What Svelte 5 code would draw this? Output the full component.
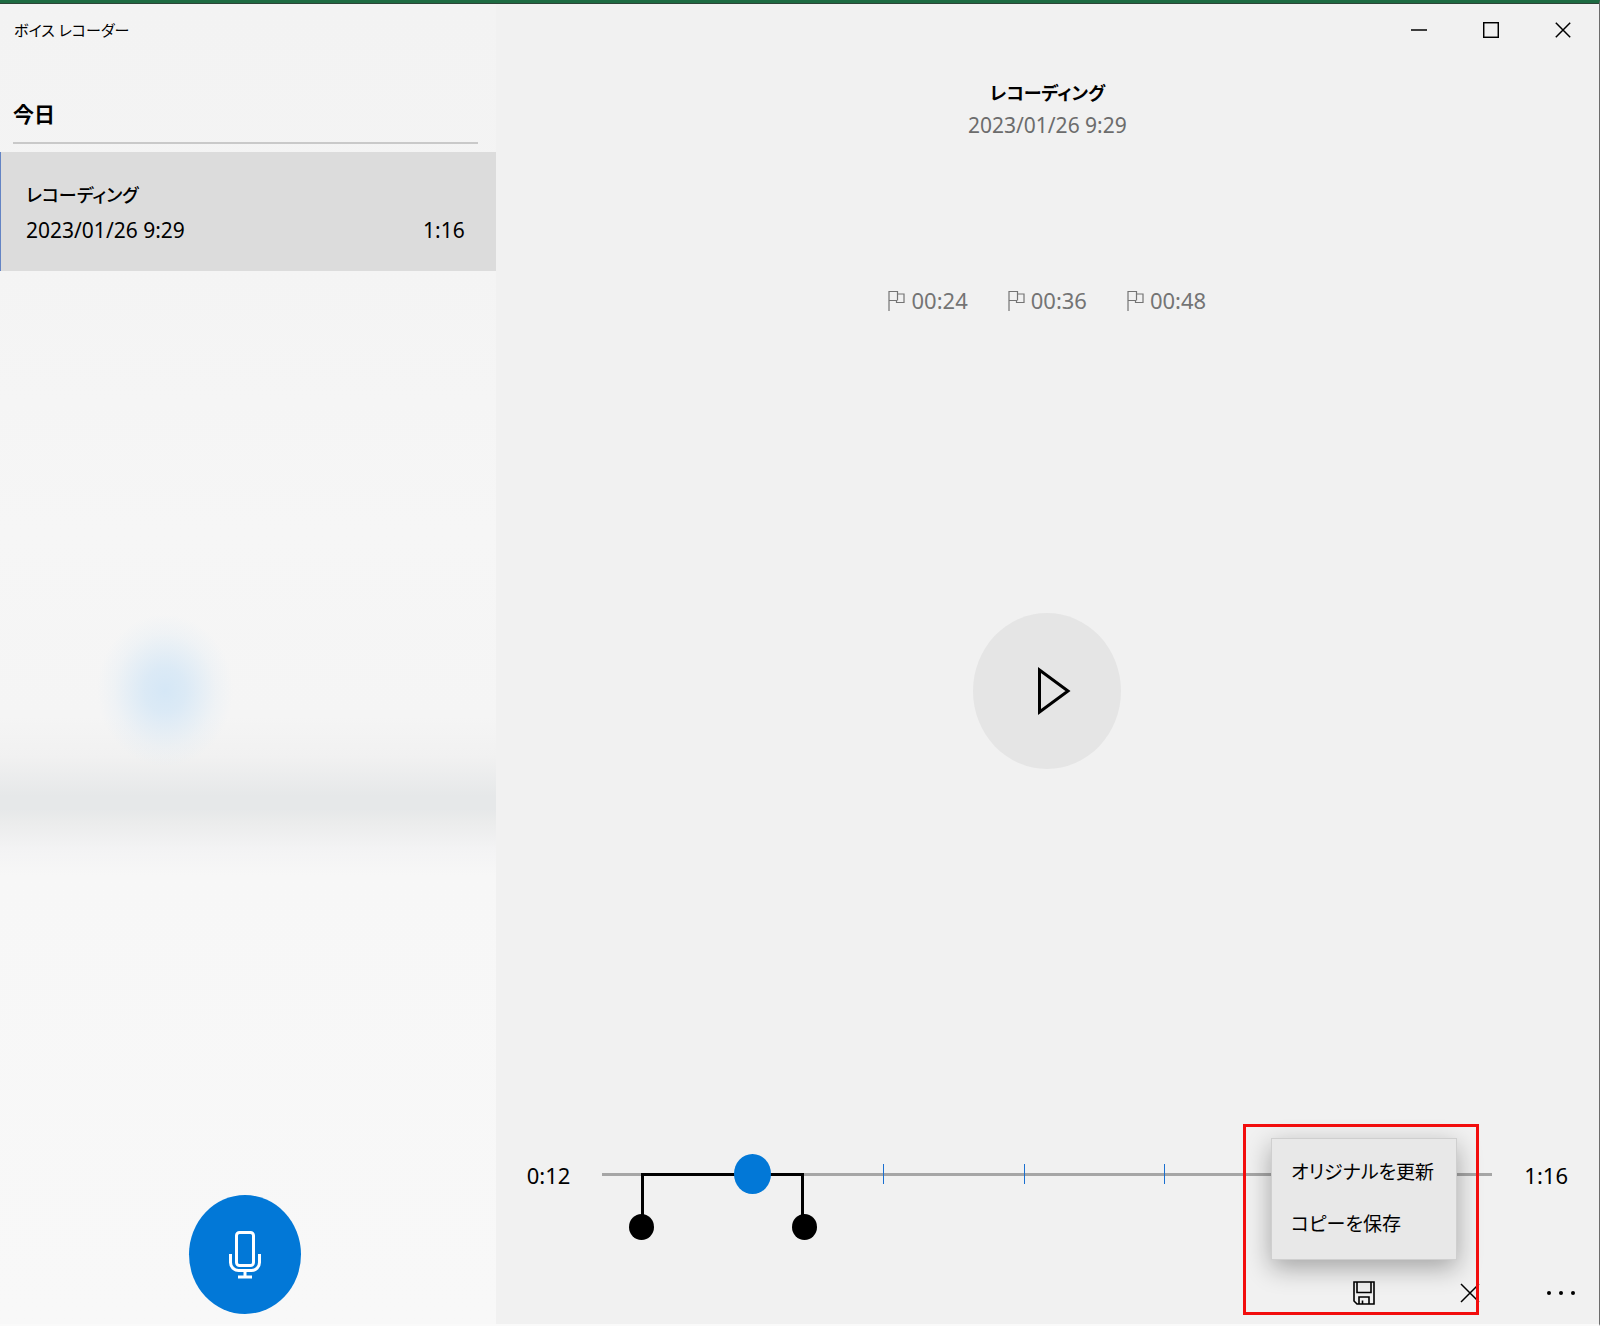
<script lang="ts">
  interface Recording { id: number; name: string; date: string; length: number; }

  const recordings: Recording[] = [
    { id: 1, name: 'レコーディング', date: '2023/01/26 9:29', length: 76 }
  ];
  const markers = [24, 36, 48];

  let selectedId = $state(1);
  let position = $state(11.7);
  let trimStart = $state(2.3);
  let trimEnd = $state(16.7);
  let menuOpen = $state(true);

  let current = $derived(recordings.find((r) => r.id === selectedId) ?? recordings[0]);

  function formatTime(s: number): string {
    const total = Math.round(s);
    return `${Math.floor(total / 60)}:${String(total % 60).padStart(2, '0')}`;
  }

  // the handle is 25px wide, so its centre travels over 100% - 25px
  function handleX(s: number): string {
    return `calc(12px + (100% - 25px) * ${s / current.length})`;
  }
</script>

<div class="window">
  <aside class="sidebar">
    <h1 class="app-title">ボイス レコーダー</h1>
    <h2 class="group-title">今日</h2>
    <ul class="recordings">
      {#each recordings as rec (rec.id)}
        <li>
          <button class="recording" class:selected={rec.id === selectedId} onclick={() => (selectedId = rec.id)}>
            <span class="rec-name">{rec.name}</span>
            <span class="rec-info">
              <span>{rec.date}</span>
              <span>{formatTime(rec.length)}</span>
            </span>
          </button>
        </li>
      {/each}
    </ul>
    <button class="record" aria-label="録音">
      <svg width="32" height="48" viewBox="0 0 32 48" fill="none" stroke="#fff" stroke-width="3">
        <rect x="7.5" y="1.5" width="17" height="33" rx="3" />
        <path d="M1.5 23v8.500a8 8 0 0 0 8 8h13a8 8 0 0 0 8-8V23M16 39v7M9 46h14" />
      </svg>
    </button>
  </aside>

  <main class="player">
    <div class="titlebar">
      <button class="caption" aria-label="最小化">
        <svg width="16" height="16" viewBox="0 0 16 16"><path d="M0 8h16" /></svg>
      </button>
      <button class="caption" aria-label="最大化">
        <svg width="16" height="16" viewBox="0 0 16 16"><rect x="0.7" y="0.7" width="14.600" height="14.600" /></svg>
      </button>
      <button class="caption" aria-label="閉じる">
        <svg width="16" height="16" viewBox="0 0 16 16"><path d="M.8.8l14.400 14.400M15.200.8L.8 15.200" /></svg>
      </button>
    </div>

    <header class="heading">
      <h2>{current.name}</h2>
      <p>{current.date}</p>
    </header>

    <div class="markers">
      {#each markers as m}
        <button class="marker" onclick={() => (position = m)}>
          <svg width="17" height="21" viewBox="0 0 17 21" fill="none" stroke="currentColor" stroke-width="1.200">
            <path d="M1 21V1.500h8.500v2.500h6.500v8.500H8.500V10.500H1M9.500 4v6.500" />
          </svg>
          0{formatTime(m)}
        </button>
      {/each}
    </div>

    <div class="stage">
      <button class="play" aria-label="再生">
        <svg width="34" height="50" viewBox="0 0 34 50" fill="none" stroke="#000" stroke-width="3">
          <path d="M2.500 4v42L31 25z" />
        </svg>
      </button>
    </div>

    <div class="timeline">
      <span class="time">{formatTime(position)}</span>
      <div class="track">
        <div class="rail"></div>
        {#each markers as m}
          <div class="tick" style="left: {(m / current.length) * 100}%"></div>
        {/each}
        <div class="trim" style="left: {handleX(trimStart)}; right: calc(100% - {handleX(trimEnd)})"></div>
        <input class="handle" type="range" min="0" max={current.length} step="0.1" bind:value={trimStart} aria-label="トリミングの開始" />
        <input class="handle" type="range" min="0" max={current.length} step="0.1" bind:value={trimEnd} aria-label="トリミングの終了" />
        <input class="seek" type="range" min="0" max={current.length} step="0.1" bind:value={position} aria-label="再生位置" />
      </div>
      <span class="time">{formatTime(current.length)}</span>
    </div>

    <div class="commands">
      <div class="save">
        <button class="command" aria-label="保存" onclick={() => (menuOpen = !menuOpen)}>
          <svg width="22" height="24" viewBox="0 0 22 24" fill="none" stroke="#000" stroke-width="1.600">
            <path d="M1 1h20v22H4l-3-3zM4 1v10.500h14V1M6 23v-7h10v7M9.500 23v-3.500" />
          </svg>
        </button>
        {#if menuOpen}
          <div class="menu" role="menu">
            <button role="menuitem">オリジナルを更新</button>
            <button role="menuitem">コピーを保存</button>
          </div>
        {/if}
        <div class="highlight"></div>
      </div>
      <button class="command" aria-label="キャンセル">
        <svg width="20" height="20" viewBox="0 0 20 20" fill="none" stroke="#000" stroke-width="1.500">
          <path d="M1 1l18 18M19 1L1 19" />
        </svg>
      </button>
      <button class="command more" aria-label="その他">
        <svg width="28" height="6" viewBox="0 0 28 6"><circle cx="2" cy="3" r="2" /><circle cx="14" cy="3" r="2" /><circle cx="26" cy="3" r="2" /></svg>
      </button>
    </div>
  </main>
</div>

<style>
  :global(body) { margin: 0; }
  * { box-sizing: border-box; }
  h1, h2, p, ul { margin: 0; padding: 0; font-size: inherit; font-weight: 400; }
  ul { list-style: none; }
  button { padding: 0; border: none; background: transparent; font: inherit; color: inherit; font-feature-settings: inherit; cursor: pointer; }
  svg { display: block; flex: none; }

  .window {
    display: flex; min-height: 100vh; padding-top: 1px;
    border-top: 3px solid #1d6b42; border-right: 1px solid #6c6c6c; border-bottom: 2px solid #fafafa;
    background: #f1f1f1; color: #000; box-shadow: inset 0 1px #2c4537;
    font-family: "Noto Sans", "Noto Sans CJK JP", sans-serif; font-size: 21px; line-height: 32px;
    font-feature-settings: "palt";
  }

  .sidebar {
    display: flex; flex-direction: column; width: 31%;
    background:
      radial-gradient(ellipse 68px 76px at 165px 52%, #d5e7f6 0%, rgba(213, 231, 246, 0.8) 30%, rgba(213, 231, 246, 0.2) 75%, rgba(213, 231, 246, 0) 100%),
      linear-gradient(#f3f3f3 0%, #f4f4f4 20%, #f6f6f6 40%, #f5f5f5 54%, #f1f1f1 57%, #e6e8e9 60%, #e6e8e9 61%, #ebecec 62%, #f3f3f4 64%, #f7f7f7 66%, #f8f8f8 100%);
  }
  .app-title { padding: 10px 14px; font-size: 15px; }
  .group-title { margin: 42px 18px 8px 13px; padding-bottom: 12px; border-bottom: 2px solid #c9c9c9; font-weight: 700; }
  .recording {
    display: flex; flex-direction: column; width: 100%; padding: 25px 31px 23px 25px;
    border-left: 1px solid transparent; text-align: left;
  }
  .recording.selected { border-left-color: #6484c4; background: #dcdcdc; }
  .rec-name { font-size: 18px; font-weight: 500; line-height: 36px; }
  .rec-info { display: flex; justify-content: space-between; line-height: 35px; }
  .record {
    display: grid; place-items: center; align-self: center; width: 112px; height: 119px;
    margin: auto 6px 10px 0; border-radius: 50%; background: #0278d7;
  }

  .player { flex: 1; display: flex; flex-direction: column; min-width: 0; }
  .titlebar { display: flex; justify-content: flex-end; }
  .caption { display: grid; place-items: center; width: 72px; height: 52px; }
  .caption svg { fill: none; stroke: #000; stroke-width: 1.500; }
  .heading { padding-top: 21px; text-align: center; }
  .heading h2 { font-size: 18px; font-weight: 700; }
  .heading p { color: #6c6c6c; }
  .markers { display: flex; justify-content: center; gap: 40px; margin-top: 143px; color: #747474; }
  .marker { display: flex; align-items: center; gap: 6px; font-size: 22px; }
  .stage { flex: 1; display: grid; place-items: center; padding-bottom: 88px; }
  .play { display: grid; place-items: center; width: 148px; height: 156px; padding-left: 14px; border-radius: 50%; background: #e5e5e5; }

  .timeline { display: flex; height: 108px; padding: 0 31px; gap: 32px; }
  .time { font-size: 22px; line-height: 42px; }
  .track { position: relative; flex: 1; height: 40px; }
  .rail { position: absolute; left: 0; right: 0; top: 19px; height: 3px; background: #a6a6a6; }
  .tick { position: absolute; top: 10px; width: 1px; height: 20px; background: #1a6fd0; }
  .trim { position: absolute; top: 19px; height: 50px; border: solid #000; border-width: 3px 3px 0; }
  .seek, .handle { position: absolute; left: 0; width: 100%; margin: 0; background: transparent; appearance: none; pointer-events: none; }
  .seek { top: 0; height: 40px; }
  .handle { top: 60px; height: 26px; }
  .seek::-webkit-slider-thumb { appearance: none; width: 37px; height: 40px; border-radius: 50%; background: #0278d7; pointer-events: auto; }
  .handle::-webkit-slider-thumb { appearance: none; width: 25px; height: 26px; border-radius: 50%; background: #000; pointer-events: auto; }

  .commands { display: flex; justify-content: flex-end; }
  .save { position: relative; }
  .command { display: grid; place-items: center; width: 106px; height: 62px; }
  .more { width: 76px; }
  .menu {
    position: absolute; bottom: 64px; left: 50%; z-index: 1; transform: translateX(-50%);
    display: flex; flex-direction: column; width: 186px; padding: 7px 0 9px;
    border: 1px solid #cfcfcf; background: #e8e8e8; box-shadow: 0 8px 24px rgba(0, 0, 0, 0.32);
  }
  .menu button { height: 52px; padding-left: 19px; font-size: 19px; text-align: left; white-space: nowrap; }
  .highlight { position: absolute; left: -68px; right: -62px; bottom: 9px; z-index: 2; height: 191px; border: 3px solid #f20d0d; pointer-events: none; }
</style>
